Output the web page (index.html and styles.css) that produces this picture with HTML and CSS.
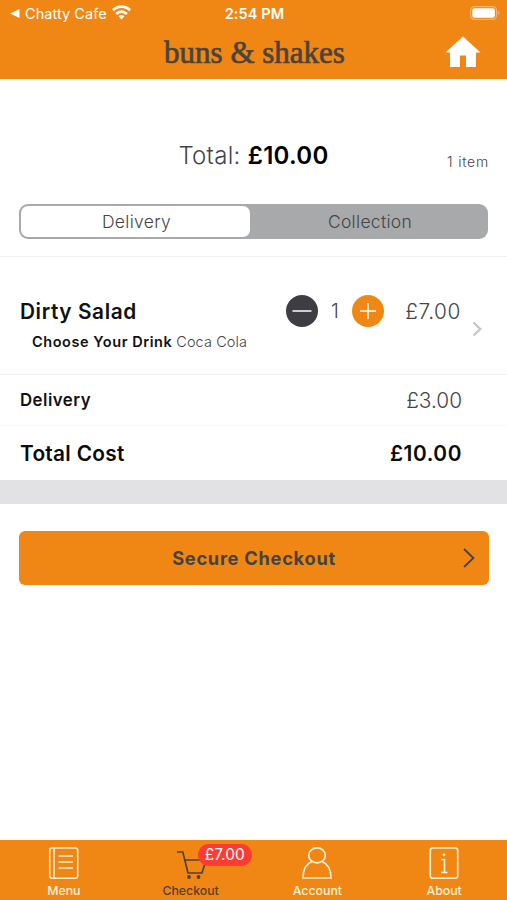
FILE: index.html
```html
<!DOCTYPE html>
<html lang="en">
<head>
<meta charset="utf-8">
<title>Checkout</title>
<link rel="stylesheet" href="styles.css">
</head>
<body>
<div class="app">
  <header class="header">
    <div class="status">
      <div class="back">
        <svg width="10" height="9" viewBox="0 0 10 9"><path d="M0 4.5 9.5 0v9z" fill="#fff"/></svg>
        <span class="back-label">Chatty Cafe</span>
        <svg class="wifi" width="19" height="15" viewBox="0 0 19 15"><g fill="none" stroke="#fff" stroke-width="2.8"><path d="M1 5.2a12 12 0 0 1 17 0"/><path d="M4.2 8.9a7.5 7.5 0 0 1 10.6 0"/></g><path d="M6.5 11.3a4.2 4.2 0 0 1 6 0l-3 3.2z" fill="#fff"/></svg>
      </div>
      <span class="time">2:54 PM</span>
      <svg class="battery" width="30" height="14" viewBox="0 0 30 14"><rect x=".6" y=".6" width="26" height="12.8" rx="3.8" fill="none" stroke="#f6b467" stroke-width="1.2"/><rect x="2.3" y="2.3" width="22.6" height="9.4" rx="2.2" fill="#fff"/><path d="M28 5c1.7.7 1.7 3.3 0 4z" fill="#f6b467"/></svg>
    </div>
    <div class="titlebar">
      <h1 class="title">buns &amp; shakes</h1>
      <svg class="home" width="36" height="32" viewBox="0 0 36 32"><path d="M18 .5 35.5 16.5H31V31H21V19.5H15V31H5V16.5H.5z" fill="#fff"/></svg>
    </div>
  </header>

  <main>
    <section class="summary">
      <div class="summary-line">
        <p class="total"><span>Total:</span> <b class="total-value">£10.00</b></p>
        <span class="count">1 item</span>
      </div>
      <div class="segments">
        <div class="segment selected">Delivery</div>
        <div class="segment">Collection</div>
      </div>
    </section>

    <section class="item">
      <div class="item-row">
        <h2 class="item-name">Dirty Salad</h2>
        <div class="stepper">
          <svg width="32" height="32" viewBox="0 0 32 32"><circle cx="16" cy="16" r="16" fill="#3d3d43"/><path d="M6.5 16h19" stroke="#fff" stroke-width="1.5"/></svg>
          <span class="qty">1</span>
          <svg width="32" height="32" viewBox="0 0 32 32"><circle cx="16" cy="16" r="16" fill="#f08715"/><path d="M8 16h16M16 8v16" stroke="#fff" stroke-width="1.5"/></svg>
        </div>
        <span class="price item-price">£7.00</span>
      </div>
      <p class="option"><b class="option-name">Choose Your Drink</b><span class="option-value">Coca Cola</span></p>
      <svg class="chevron" width="10" height="16" viewBox="0 0 10 16"><path d="M1.5 1.5 8.3 8l-6.8 6.5" fill="none" stroke="#c4c4c6" stroke-width="2.2"/></svg>
    </section>

    <section class="row row-delivery"><span class="delivery-label">Delivery</span><span class="price">£3.00</span></section>
    <section class="row row-total"><span class="cost-label">Total Cost</span><span class="cost">£10.00</span></section>
    <div class="band"></div>

    <button class="checkout">
      <span class="checkout-label">Secure Checkout</span>
      <svg class="go" width="12" height="20" viewBox="0 0 12 20"><path d="M1 1l9.4 9L1 19" fill="none" stroke="#46423f" stroke-width="1.8"/></svg>
    </button>
  </main>

  <nav class="tabs">
    <div class="tab">
      <svg class="nudged" width="32" height="34" viewBox="0 0 32 34"><g fill="none" stroke="#fff0d8" stroke-width="1.5"><rect x="1.7" y="2" width="28" height="30.3" rx="2.5"/><path d="M6 2v30.300M10.500 10H25M10.500 16H25M10.500 22H25"/></g></svg>
      <span>Menu</span>
    </div>
    <div class="tab active">
      <svg class="nudged" width="32" height="34" viewBox="0 0 32 34"><path d="M2 6h5.800L13 27h14l4-13H10" fill="none" stroke="#54402f" stroke-width="1.700"/><circle cx="14" cy="31" r="1.900" fill="#54402f"/><circle cx="23.500" cy="31" r="1.900" fill="#54402f"/></svg>
      <span>Checkout</span>
      <span class="badge">£7.00</span>
    </div>
    <div class="tab">
      <svg width="32" height="34" viewBox="0 0 32 34"><g fill="none" stroke="#fff0d8" stroke-width="1.600"><ellipse cx="16" cy="9.400" rx="8.300" ry="7.500"/><path d="M11 15.400C5.300 17.600 2 23 2 32h28c0-9-3.300-14.400-9-16.600"/></g></svg>
      <span>Account</span>
    </div>
    <div class="tab">
      <svg width="32" height="34" viewBox="0 0 32 34"><g fill="none" stroke="#fff0d8" stroke-width="1.600"><rect x="2.300" y="2" width="27.400" height="30.300" rx="2.500"/><path d="M13 13.500h3.500V26M13 26.500h6.500"/></g><circle cx="16" cy="8.800" r="1.400" fill="#fff0d8"/></svg>
      <span>About</span>
    </div>
  </nav>
</div>
</body>
</html>
```

FILE: styles.css
```css
* { box-sizing: border-box; }
body { margin: 0; background: #fff; color: #454547; font-family: Inter, "Liberation Sans", sans-serif; }
h1, h2, p { margin: 0; }
svg { display: block; flex: none; }
span, b { white-space: nowrap; }
.app { width: 507px; height: 900px; display: flex; flex-direction: column; }
main { flex: 1; }

.header { height: 79px; background: #f08715; }
.status { height: 27px; padding: 0 8px 0 10px; display: grid; grid-template-columns: 1fr auto 1fr; align-items: center; color: #fff; }
.back { display: flex; align-items: center; }
.back-label { margin-left: 5px; font-size: 14.5px; line-height: 20px; letter-spacing: 0.05px; }
.wifi { margin-left: 5px; margin-top: -2px; }
.time { font-size: 14.5px; font-weight: 600; letter-spacing: 0.1px; }
.battery { justify-self: end; margin-right: -1px; margin-top: -1px; }
.titlebar { height: 52px; display: grid; grid-template-columns: 1fr auto 1fr; align-items: center; padding-right: 26px; padding-left: 28px; }
.title { grid-column: 2; font: 400 31px/40px "Liberation Serif", serif; -webkit-text-stroke: 0.7px #4a433e; color: #4a433e; }
.home { justify-self: end; margin-top: -3px; }

.summary { height: 178px; padding: 61px 19px 0; border-bottom: 1px solid #f2f2f3; }
.summary-line { height: 30px; display: grid; grid-template-columns: 1fr auto 1fr; align-items: center; }
.total { grid-column: 2; font-size: 24px; line-height: 30px; font-weight: 300; letter-spacing: 0.3px; margin-top: 1px; }
.total-value { color: #000; font-weight: 600; }
.count { justify-self: end; font-size: 14px; font-weight: 300; margin-top: 12px; letter-spacing: 0.8px; margin-right: -1px; }
.segments { margin-top: 34px; height: 35px; padding: 2px; display: flex; border-radius: 9px; background: #a7a9aa; }
.segment { flex: 1; display: flex; align-items: center; justify-content: center; font-size: 17.5px; font-weight: 300; letter-spacing: 0.3px; padding-left: 4px; border-radius: 7px; }
.selected { flex: 0 0 229px; background: #fff; padding-left: 2px; }

.item { position: relative; height: 118px; padding: 38px 46px 0 20px; border-bottom: 1px solid #f2f2f3; }
.item-row { display: flex; align-items: center; height: 32px; }
.item-name { flex: 1; font-size: 20.8px; font-weight: 600; color: #111; letter-spacing: 0.6px; }
.stepper { display: flex; align-items: center; margin-right: 1px; }
.qty { width: 34px; text-align: center; font-size: 20px; font-weight: 300; }
.price { font-size: 20.8px; font-weight: 300; }
.item-price { width: 76px; text-align: right; letter-spacing: 0.6px; }
.option { display: flex; margin: 5px 0 0 12px; font-size: 14.5px; line-height: 20px; }
.option-name { font-weight: 600; color: #111; letter-spacing: 0.56px; }
.option-value { margin-left: 4px; font-weight: 300; letter-spacing: 0.1px; }
.chevron { position: absolute; left: 472px; top: 64px; }

.row { display: flex; align-items: center; justify-content: space-between; padding: 0 45px 0 20px; }
.row-delivery { height: 51px; border-bottom: 1px solid #f8f8f9; }
.row-total { height: 54px; color: #0b0b0b; font-weight: 600; font-size: 20.8px; }
.cost-label { letter-spacing: 0.3px; }
.cost { letter-spacing: 0.6px; }
.delivery-label { font-size: 16.8px; font-weight: 600; color: #111; letter-spacing: 0.5px; }
.band { height: 24px; background: #e2e2e4; }

.checkout { display: grid; grid-template-columns: 1fr auto 1fr; align-items: center; width: 470px; height: 54px; margin: 27px 0 0 19px; padding: 0 14px; border: 0; border-radius: 6px; background: #f08715; color: #46423f; font: 700 18.3px Inter, sans-serif; }
.checkout-label { grid-column: 2; letter-spacing: 0.7px; }
.go { justify-self: end; }

.tabs { height: 60px; display: grid; grid-template-columns: repeat(4, 1fr); background: #f08715; color: #fff0d8; font-size: 12.3px; font-weight: 500; }
.tab { position: relative; display: flex; flex-direction: column; align-items: center; padding: 6px 0 0 1px; line-height: 16px; gap: 3px; }
.active { color: #54402f; }
.nudged { margin-left: 1px; }
.badge { position: absolute; left: 71px; top: 4px; width: 54px; height: 22px; border-radius: 11px; background: #fc3b32; color: #fff; font-size: 15.5px; font-weight: 400; line-height: 22px; text-align: center; }
```
